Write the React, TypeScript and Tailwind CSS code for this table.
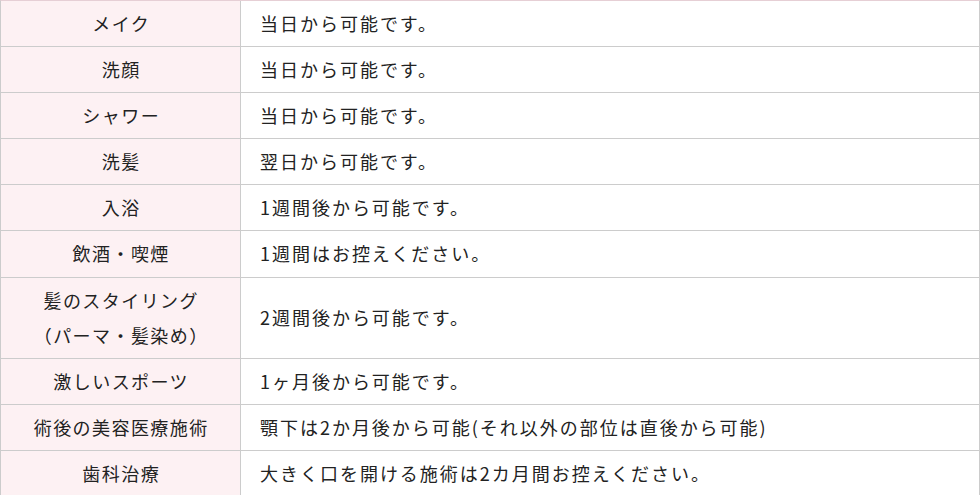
import React from "react";

const rows: { label: string[]; value: string }[] = [
  { label: ["メイク"], value: "当日から可能です。" },
  { label: ["洗顔"], value: "当日から可能です。" },
  { label: ["シャワー"], value: "当日から可能です。" },
  { label: ["洗髪"], value: "翌日から可能です。" },
  { label: ["入浴"], value: "1週間後から可能です。" },
  { label: ["飲酒・喫煙"], value: "1週間はお控えください。" },
  { label: ["髪のスタイリング", "（パーマ・髪染め）"], value: "2週間後から可能です。" },
  { label: ["激しいスポーツ"], value: "1ヶ月後から可能です。" },
  { label: ["術後の美容医療施術"], value: "顎下は2か月後から可能(それ以外の部位は直後から可能)" },
  { label: ["歯科治療"], value: "大きく口を開ける施術は2カ月間お控えください。" },
];

export default function App() {
  return (
    <div
      className="w-[980px] h-[495px] overflow-hidden bg-white text-[#222]"
      style={{ fontFamily: '"Noto Sans CJK JP", "Noto Sans", sans-serif' }}
    >
      <div className="border-t border-[#e6cfd5] border-l border-r border-l-[#cccccc] border-r-[#cccccc]">
        {rows.map((r, i) => (
          <div key={i} className="flex border-b border-[#cccccc]">
            <div className="w-[240px] shrink-0 bg-[#fdf1f3] border-r border-[#cccccc] flex flex-col items-center justify-center py-[5px] text-[18px] leading-[35.1px] tracking-[0.08em]">
              {r.label.map((l, j) => (
                <div key={j} className="pl-[0.08em]">{l}</div>
              ))}
            </div>
            <div className="flex-1 flex items-center pl-[19px] py-[5px] text-[18px] leading-[35.1px] tracking-[0.11em]">
              {r.value}
            </div>
          </div>
        ))}
      </div>
    </div>
  );
}
